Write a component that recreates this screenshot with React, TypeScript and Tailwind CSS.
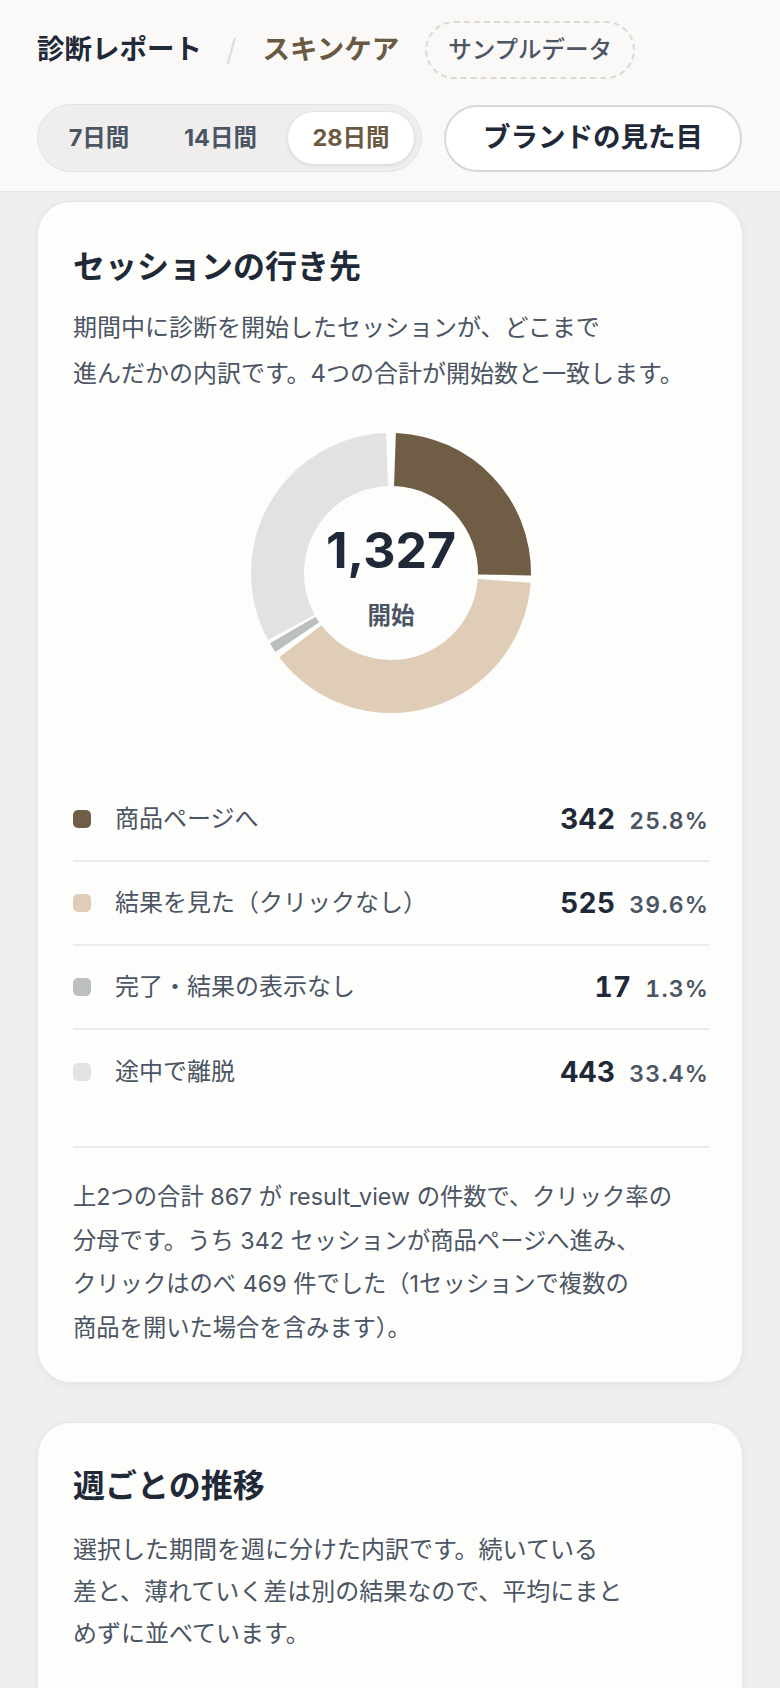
import React from "react";

type Seg = { color: string; a0: number; a1: number };

const CX = 140;
const CY = 140;
const R = 140;
const RI = 87;

function pt(rad: number, deg: number) {
  const a = (deg * Math.PI) / 180;
  return [CX + rad * Math.sin(a), CY - rad * Math.cos(a)];
}

function arc(a0: number, a1: number) {
  const large = a1 - a0 > 180 ? 1 : 0;
  const [x0, y0] = pt(R, a0);
  const [x1, y1] = pt(R, a1);
  const [x2, y2] = pt(RI, a1);
  const [x3, y3] = pt(RI, a0);
  return `M ${x0} ${y0} A ${R} ${R} 0 ${large} 1 ${x1} ${y1} L ${x2} ${y2} A ${RI} ${RI} 0 ${large} 0 ${x3} ${y3} Z`;
}

const segs: Seg[] = [
  { color: "#6f5e45", a0: 2, a1: 91 },
  { color: "#dfcdb8", a0: 94, a1: 233 },
  { color: "#bbbfc0", a0: 235.6, a1: 239.9 },
  { color: "#e2e2e2", a0: 241.4, a1: 358 },
];

const legend = [
  { color: "bg-[#6f5e45]", label: "商品ページへ", n: "342", p: "25.8%" },
  { color: "bg-[#dfcdb8]", label: "結果を見た（クリックなし）", n: "525", p: "39.6%" },
  { color: "bg-[#bbbfc0]", label: "完了・結果の表示なし", n: "17", p: "1.3%" },
  { color: "bg-[#e2e2e2]", label: "途中で離脱", n: "443", p: "33.4%" },
];

export default function App() {
  return (
    <div className="min-h-screen bg-[#f0efed] font-[Inter,'Noto_Sans_CJK_JP',sans-serif] text-[#1f2937] pb-10">
      <header className="bg-[#faf9f7] border-b border-[#e8e6e3] px-[37px] pt-[21px] pb-[19px]">
        <div className="flex items-center h-[58px]">
          <span className="text-[27.5px] font-bold text-[#1f2937] leading-none">診断レポート</span>
          <span className="ml-[24px] mr-[26px] text-[30px] font-light text-[#dcdad6] leading-none">/</span>
          <span className="text-[27.5px] font-bold text-[#6b5a43] leading-none">スキンケア</span>
          <span className="ml-[26px] h-[58px] px-[21px] flex items-center rounded-full border-2 border-dashed border-[#dcd9d5] text-[23.5px] font-medium text-[#4b5563]">
            サンプルデータ
          </span>
        </div>
        <div className="mt-[25px] flex items-center gap-[22px]">
          <div className="flex items-center gap-[5px] p-[7px] rounded-full bg-[#efeeec] border border-[#e5e3e0]">
            <div className="w-[108px] h-[52px] flex items-center justify-center rounded-full text-[23.5px] font-bold text-[#4b5563]">
              7日間
            </div>
            <div className="w-[125px] h-[52px] flex items-center justify-center rounded-full text-[23.5px] font-bold text-[#4b5563]">
              14日間
            </div>
            <div className="w-[126px] h-[52px] flex items-center justify-center rounded-full bg-white shadow-[0_1px_4px_rgba(0,0,0,0.12)] text-[23.5px] font-bold text-[#6b5a43]">
              28日間
            </div>
          </div>
          <div className="h-[67px] px-[37px] flex items-center rounded-full border-2 border-[#dad8d5] bg-white text-[27.5px] font-bold text-[#1f2937]">
            ブランドの見た目
          </div>
        </div>
      </header>

      <section className="mx-[37px] mt-[9px] rounded-[34px] bg-[#fdfdfc] border border-[#e9e7e4] shadow-[0_2px_10px_rgba(0,0,0,0.05)] pl-[35px] pr-[33px] pt-[45px] pb-[33px]">
        <h2 className="text-[32px] font-bold leading-[40px] text-[#1f2937]">セッションの行き先</h2>
        <p className="mt-[18px] text-[24px] leading-[46px] text-[#4b5563] whitespace-nowrap">
          期間中に診断を開始したセッションが、どこまで
          <br />
          進んだかの内訳です。4つの合計が開始数と一致します。
        </p>

        <div className="mt-[36px] flex justify-center">
          <div className="relative w-[280px] h-[280px]">
            <svg width="280" height="280" viewBox="0 0 280 280">
              {segs.map((s, i) => (
                <path key={i} d={arc(s.a0, s.a1)} fill={s.color} />
              ))}
            </svg>
            <div className="absolute inset-0 flex flex-col items-center pt-[92px]">
              <span className="text-[50px] leading-[50px] font-bold text-[#1f2937]">1,327</span>
              <span className="mt-[26px] text-[23.5px] leading-[30px] font-semibold text-[#4b5563]">開始</span>
            </div>
          </div>
        </div>

        <div className="mt-[65px]">
          {legend.map((l, i) => (
            <div
              key={i}
              className={
                "h-[84px] flex items-center " +
                (i < legend.length - 1 ? "border-b-2 border-[#ebeae8]" : "")
              }
            >
              <span className={"w-[18px] h-[18px] rounded-[5px] " + l.color} />
              <span className="ml-[24px] text-[24px] text-[#4b5563]">{l.label}</span>
              <span className="ml-auto flex items-baseline gap-[14px]">
                <span className="text-[28px] font-bold text-[#1f2937] tabular-nums tracking-[0.01em]">{l.n}</span>
                <span className="text-[23px] font-semibold text-[#4b5563] tabular-nums tracking-[0.05em]">{l.p}</span>
              </span>
            </div>
          ))}
        </div>

        <div className="mt-[32px] border-t-2 border-[#ebeae8] pt-[27px]">
          <p className="text-[23.3px] leading-[43.5px] text-[#4b5563] whitespace-nowrap">
            上2つの合計 867 が result_view の件数で、クリック率の
            <br />
            分母です。うち 342 セッションが商品ページへ進み、
            <br />
            クリックはのべ 469 件でした（1セッションで複数の
            <br />
            商品を開いた場合を含みます）。
          </p>
        </div>
      </section>

      <section className="mx-[37px] mt-[39px] rounded-[34px] bg-[#fdfdfc] border border-[#e9e7e4] shadow-[0_2px_10px_rgba(0,0,0,0.05)] pl-[35px] pr-[33px] pt-[43px] pb-[35px]">
        <h2 className="text-[32px] font-bold leading-[40px] text-[#1f2937]">週ごとの推移</h2>
        <p className="mt-[23px] text-[24px] leading-[42px] text-[#4b5563] whitespace-nowrap">
          選択した期間を週に分けた内訳です。続いている
          <br />
          差と、薄れていく差は別の結果なので、平均にまと
          <br />
          めずに並べています。
        </p>
        <div className="h-[240px]" />
      </section>
    </div>
  );
}
